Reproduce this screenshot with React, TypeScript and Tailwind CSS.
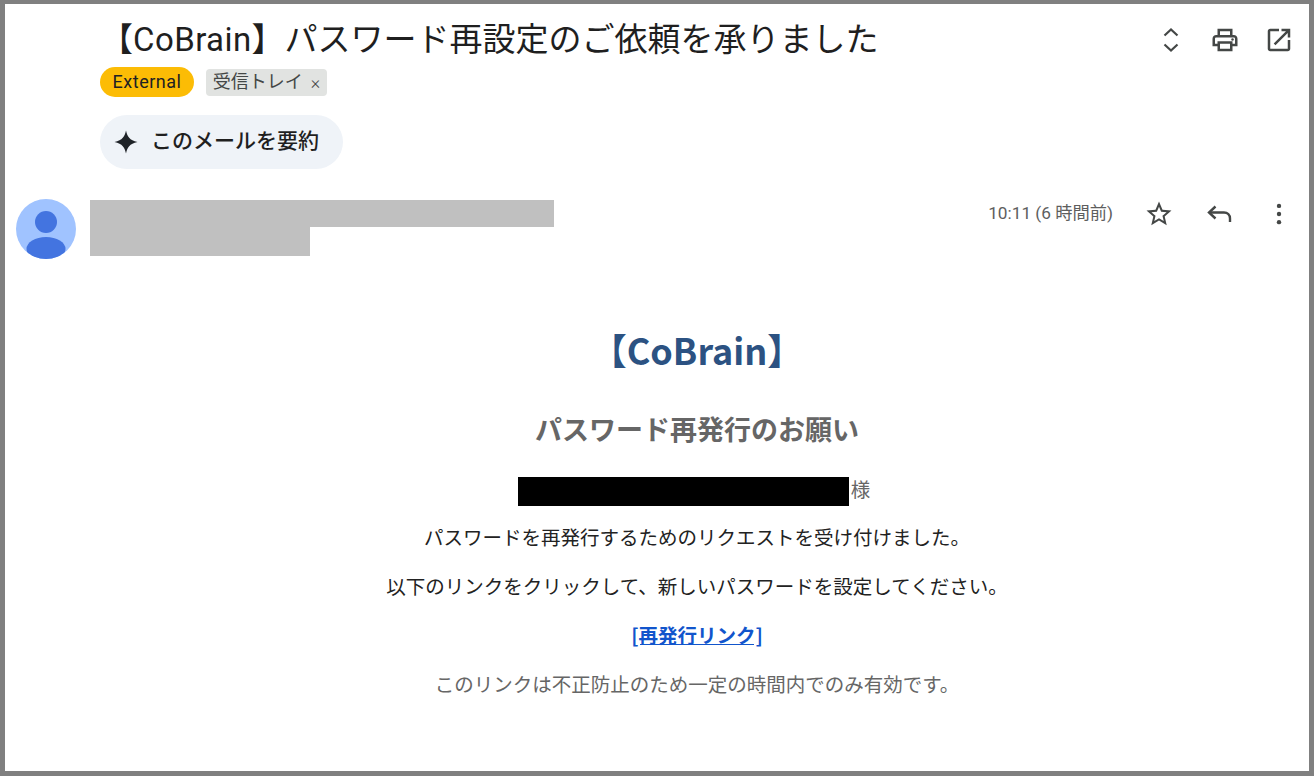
const jp = 'font-["Roboto","Noto_Sans_CJK_JP",sans-serif]';

function Icon({ d, children }: { d?: string; children?: React.ReactNode }) {
  return (
    <svg viewBox="0 0 24 24" className="h-[30px] w-[30px] shrink-0 fill-[#444746]">
      {d && <path d={d} />}
      {children}
    </svg>
  );
}

function Sparkle() {
  return (
    <svg viewBox="0 0 24 24" className="h-[24px] w-[24px] fill-[#1f2328]">
      <path d="M12 0.5 C13.2 6 15.5 10.5 23.5 12 C15.5 13.5 13.2 18 12 23.5 C10.8 18 8.5 13.5 0.5 12 C8.5 10.5 10.8 6 12 0.5 Z" />
    </svg>
  );
}

function Avatar() {
  return (
    <svg viewBox="0 0 60 60" className="h-[60px] w-[60px] shrink-0">
      <defs>
        <clipPath id="avatar-clip">
          <circle cx="30" cy="30" r="30" />
        </clipPath>
      </defs>
      <circle cx="30" cy="30" r="30" fill="#a0c3ff" />
      <g clipPath="url(#avatar-clip)" fill="#4374e0">
        <circle cx="30" cy="23" r="11" />
        <ellipse cx="30" cy="50" rx="19.5" ry="12" />
      </g>
    </svg>
  );
}

export default function App() {
  return (
    <div className={`flex h-[776px] w-[1314px] flex-col overflow-hidden border-[5px] border-t-[4px] border-[#808080] bg-white ${jp}`}>
      <div className="flex h-[63px] shrink-0 items-start justify-between pl-[95px] pr-[15px]">
        <h1 className="pt-[12px] text-[33px] leading-[48px] whitespace-nowrap text-[#1f1f1f]">
          【<span className="tracking-[0.43px]">CoBrain</span>】パスワード再設定のご依頼を承りました
        </h1>
        <div className="flex items-center gap-[24px] pt-[21px]">
          <svg viewBox="0 0 30 30" className="h-[30px] w-[30px] fill-none stroke-[#444746] stroke-[2.2]">
            <path d="M8.5 10.5 L15 4.5 L21.5 10.5" />
            <path d="M8.5 19.5 L15 25.5 L21.5 19.5" />
          </svg>
          <Icon>
            <path d="M19 8h-1V3H6v5H5c-1.66 0-3 1.34-3 3v6h4v4h12v-4h4v-6c0-1.66-1.34-3-3-3zM8 5h8v3H8V5zm8 12v2H8v-4h8v2zm2-2v-2H6v2H4v-4c0-.55.45-1 1-1h14c.55 0 1 .45 1 1v4h-2z" />
            <circle cx="18" cy="11.5" r="1" />
          </Icon>
          <Icon d="M19 19H5V5h7V3H5c-1.11 0-2 .9-2 2v14c0 1.1.89 2 2 2h14c1.1 0 2-.9 2-2v-7h-2v7zM14 3v2h3.59l-9.83 9.83 1.41 1.41L19 6.41V10h2V3h-7z" />
        </div>
      </div>
      <div className="flex h-[48px] shrink-0 items-start gap-[12px] pl-[95px]">
        <span className="flex h-[30px] w-[94px] items-center justify-center rounded-full bg-[#fcbc05] pb-[2px] text-[18px] tracking-[0.5px] text-[#202124]">External</span>
        <span className="mt-[2px] flex h-[27px] w-[121px] items-center justify-center gap-[8px] rounded-[4px] bg-[#e1e3e1] pb-[2px] text-[18px] text-[#444746]">
          受信トレイ
          <span className="pt-[2px] text-[18px] leading-none font-light">×</span>
        </span>
      </div>
      <div className="flex h-[84px] shrink-0 items-start pl-[95px]">
        <button className="flex h-[54px] w-[243px] items-center gap-[13px] rounded-[27px] bg-[#eff3f8] pl-[14px] text-[21px] font-medium text-[#1f1f1f]">
          <Sparkle />
          このメールを要約
        </button>
      </div>
      <div className="flex shrink-0 items-start">
        <div className="ml-[11px] mr-[14px]">
          <Avatar />
        </div>
        <div className="mt-[1px] flex flex-col">
          <div className="h-[27px] w-[464px] bg-[#c0c0c0]" />
          <div className="h-[29px] w-[220px] bg-[#c0c0c0]" />
        </div>
        <div className="ml-auto flex items-center gap-[30px] pr-[15px]">
          <span className="mr-[1px] text-[17.25px] text-[#5e5e5e]">10:11 (6 時間前)</span>
          <Icon d="M22 9.24l-7.19-.62L12 2 9.19 8.63 2 9.24l5.46 4.73L5.82 21 12 17.27 18.18 21l-1.63-7.03L22 9.24zM12 15.4l-3.76 2.27 1-4.28-3.32-2.88 4.38-.38L12 6.1l1.71 4.04 4.38.38-3.32 2.88 1 4.28L12 15.4z" />
          <svg viewBox="0 0 30 30" className="h-[30px] w-[30px] fill-none stroke-[#444746] stroke-[2.4]">
            <path d="M11.5 7.5 L5 13.5 L11.5 19.5" />
            <path d="M5 13.5 H20 C23.5 13.5 26 16 26 19.5 V23" />
          </svg>
          <Icon>
            <circle cx="12" cy="5.5" r="1.75" />
            <circle cx="12" cy="12" r="1.75" />
            <circle cx="12" cy="18.5" r="1.75" />
          </Icon>
        </div>
      </div>
      <div className="flex flex-col items-center pt-[63px] font-['Noto_Sans_CJK_JP',sans-serif]">
        <div className="ml-[80px] flex flex-col items-center">
          <h2 className="text-[36px] leading-[54px] font-bold text-[#2c5282]">【CoBrain】</h2>
          <h3 className="mt-[33px] text-[27px] leading-[40px] font-bold text-[#666666]">パスワード再発行のお願い</h3>
          <div className="mt-[28px] mr-[6px] flex h-[29px] items-center text-[19.5px] text-[#666666]">
            <span className="mr-[2px] h-[29px] w-[331px] bg-black" />
            <span className="mb-[5px]">様</span>
          </div>
          <p className="mt-[16px] text-[19.5px] leading-[29px] text-[#222222]">パスワードを再発行するためのリクエストを受け付けました。</p>
          <p className="mt-[20px] text-[19.5px] leading-[29px] text-[#222222]">以下のリンクをクリックして、新しいパスワードを設定してください。</p>
          <a className="mt-[20px] text-[19.5px] leading-[29px] font-bold text-[#1155cc] underline">[再発行リンク]</a>
          <p className="mt-[20px] text-[19.5px] leading-[29px] text-[#666666]">このリンクは不正防止のため一定の時間内でのみ有効です。</p>
        </div>
      </div>
    </div>
  );
}
